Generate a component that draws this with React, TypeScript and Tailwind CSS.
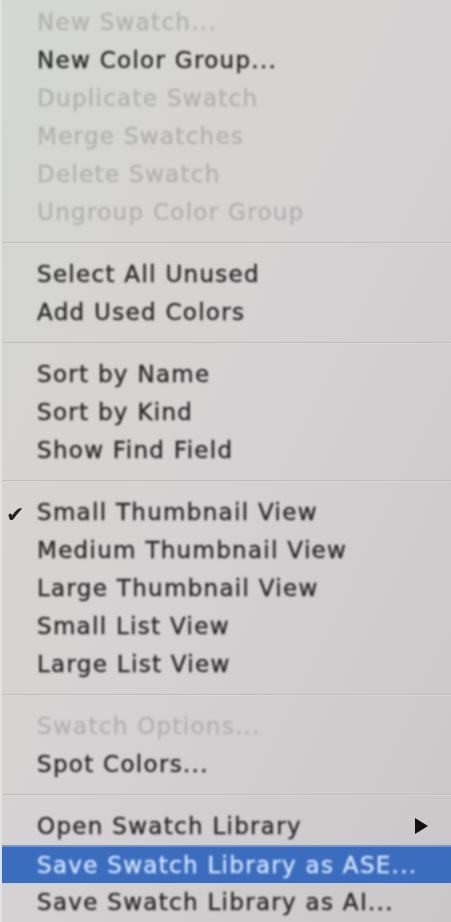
const sections: { label: string; disabled?: boolean; checked?: boolean; submenu?: boolean; active?: boolean }[][] = [
  [
    { label: 'New Swatch...', disabled: true },
    { label: 'New Color Group...' },
    { label: 'Duplicate Swatch', disabled: true },
    { label: 'Merge Swatches', disabled: true },
    { label: 'Delete Swatch', disabled: true },
    { label: 'Ungroup Color Group', disabled: true },
  ],
  [{ label: 'Select All Unused' }, { label: 'Add Used Colors' }],
  [{ label: 'Sort by Name' }, { label: 'Sort by Kind' }, { label: 'Show Find Field' }],
  [
    { label: 'Small Thumbnail View', checked: true },
    { label: 'Medium Thumbnail View' },
    { label: 'Large Thumbnail View' },
    { label: 'Small List View' },
    { label: 'Large List View' },
  ],
  [{ label: 'Swatch Options...', disabled: true }, { label: 'Spot Colors...' }],
  [
    { label: 'Open Swatch Library', submenu: true },
    { label: 'Save Swatch Library as ASE...', active: true },
    { label: 'Save Swatch Library as AI...' },
  ],
]

export default function App() {
  return (
    <div
      className="w-[451px] h-[922px] overflow-hidden pt-[3px] border-l-2 border-[#e2e2e2] bg-linear-to-br from-[#d4d7d2] via-[#d6d2d3] to-[#c9c7c8]"
      style={{ fontFamily: '"DejaVu Sans", Verdana, sans-serif' }}
    >
      {sections.map((items, si) => (
        <div key={si}>
          {si > 0 && (
            <div className="h-[24px] flex flex-col justify-center">
              <div className="h-[2px] bg-[#c0bdbd] border-b border-[#d8d6d6]" />
            </div>
          )}
          {items.map((item) => (
            <div
              key={item.label}
              className={`relative h-[38px] flex items-center pl-[35px] pr-4 text-[23px] tracking-[1.3px] ${
                item.active
                  ? 'bg-[#3b6dbf] border-t-2 border-[#6d9ad6] text-[#d0e1f7]'
                  : item.disabled
                    ? 'text-[#b2b2b2]'
                    : 'text-[#2a2a2a]'
              }`}
            >
              {item.checked && (
                <span className="absolute left-[4px] top-[5px] text-[22px] text-[#222] [filter:blur(0.7px)]">✔</span>
              )}
              <span className="whitespace-nowrap [filter:blur(0.9px)] [-webkit-text-stroke:0.4px_currentColor]">
                {item.label}
              </span>
              {item.submenu && (
                <svg className="absolute right-[22px] top-[10px] [filter:blur(0.6px)]" width="15" height="18" viewBox="0 0 15 18">
                  <path d="M1 1 L14 9 L1 17 Z" fill="#111" />
                </svg>
              )}
            </div>
          ))}
        </div>
      ))}
    </div>
  )
}
